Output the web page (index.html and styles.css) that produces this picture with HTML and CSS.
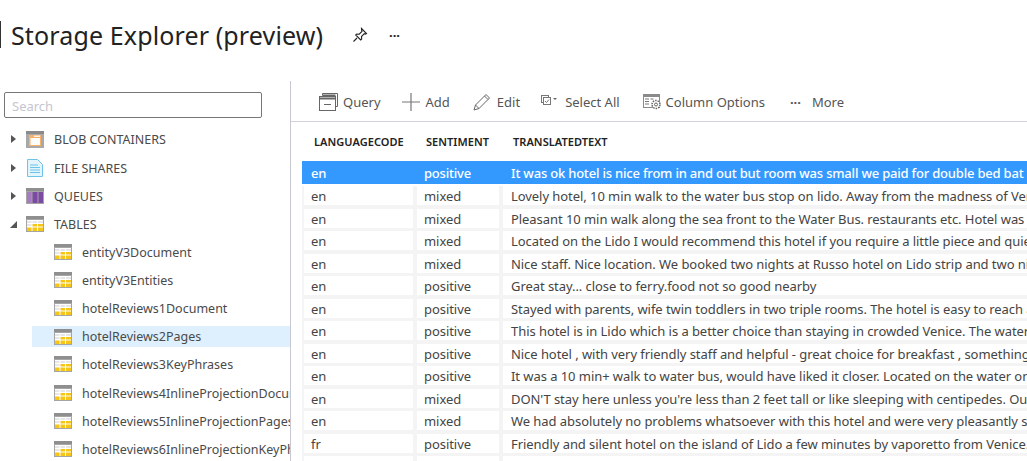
FILE: index.html
```html
<!DOCTYPE html>
<html lang="en">
	<head>
		<meta charset="UTF-8" />
		<title>Storage Explorer (preview)</title>
		<link rel="stylesheet" href="styles.css">
	</head>
	<body>
		<svg class="defs" width="0" height="0">
			<symbol id="tbl" viewBox="0 0 18 16">
				<rect width="18" height="16" fill="#a5a5a5"/>
				<rect y="0" width="18" height="3" fill="#8f8f8f"/>
				<rect x="1" y="4" width="16" height="11" fill="#fff"/>
				<path d="M1 5h4.500v2H1zM6.500 5h4.500v2H6.500zM12 5h5v2h-5zM1 8h4.500v2H1z" fill="#e6e6e6"/>
				<path d="M6.500 8h4.500v2.500H6.500zM12 8h5v2.500h-5zM1 11.500h4.500V15H1zM6.500 11.500h4.500V15H6.500zM12 11.500h5V15h-5z" fill="#f5c518"/>
			</symbol>
		</svg>

		<header class="title-bar">
			<span class="title-rule"></span>
			<h1>Storage Explorer (preview)</h1>
			<svg class="pin" width="16" height="16" viewBox="0 0 16 16" fill="none" stroke="#222" stroke-width="1.100">
				<path d="M9.500 1.500l5 5-1.200.6-1-.4-2.800 2.800.2 2.500-1 1-5-5 1-1 2.500.2 2.800-2.800-.4-1z"/>
				<path d="M5 11l-3.500 3.500"/>
			</svg>
			<span class="title-more">···</span>
		</header>

		<div class="main">
			<aside class="sidebar">
				<input class="search" type="text" placeholder="Search" />
				<ul class="tree">
					<li class="node first">
						<span class="caret"></span>
						<svg class="ico" width="18" height="17" viewBox="0 0 18 17">
							<rect width="18" height="17" fill="#a8a8a8"/>
							<rect width="18" height="3" fill="#8a8a8a"/>
							<rect x="3" y="4" width="12" height="11" fill="#f7b26a"/>
							<rect x="4.500" y="7" width="9.500" height="7" fill="#fdfdfd"/>
							<rect x="8" y="4.500" width="6" height="1.500" fill="#fdf1e2"/>
						</svg>
						BLOB CONTAINERS
					</li>
					<li class="node">
						<span class="caret"></span>
						<svg class="ico" width="18" height="18" viewBox="0 0 18 18">
							<path d="M1.500 .5h10l5 5v12h-15z" fill="#e3f4fb" stroke="#6cc4e8"/>
							<path d="M4 6h8M4 8.500h10M4 11h10M4 13.500h10" stroke="#6cc4e8"/>
						</svg>
						FILE SHARES
					</li>
					<li class="node">
						<span class="caret"></span>
						<svg class="ico" width="18" height="16" viewBox="0 0 18 16">
							<rect width="18" height="16" fill="#a5a5a5"/>
							<rect y="0" width="18" height="3" fill="#8f8f8f"/>
							<rect x="1" y="4" width="4.500" height="11" fill="#a67cc0"/>
							<rect x="6.500" y="4" width="5" height="11" fill="#7d4aa3"/>
							<rect x="12.500" y="4" width="4.500" height="11" fill="#7d4aa3"/>
						</svg>
						QUEUES
					</li>
					<li class="node">
						<span class="caret open"></span>
						<svg class="ico" width="18" height="16"><use href="#tbl"/></svg>
						TABLES
					</li>
					<li class="leaf"><svg class="ico" width="18" height="16"><use href="#tbl"/></svg><span>entityV3Document</span></li>
					<li class="leaf"><svg class="ico" width="18" height="16"><use href="#tbl"/></svg><span>entityV3Entities</span></li>
					<li class="leaf"><svg class="ico" width="18" height="16"><use href="#tbl"/></svg><span>hotelReviews1Document</span></li>
					<li class="leaf active"><svg class="ico" width="18" height="16"><use href="#tbl"/></svg><span>hotelReviews2Pages</span></li>
					<li class="leaf"><svg class="ico" width="18" height="16"><use href="#tbl"/></svg><span>hotelReviews3KeyPhrases</span></li>
					<li class="leaf pushed"><svg class="ico" width="18" height="16"><use href="#tbl"/></svg><span>hotelReviews4InlineProjectionDocument</span></li>
					<li class="leaf"><svg class="ico" width="18" height="16"><use href="#tbl"/></svg><span>hotelReviews5InlineProjectionPages</span></li>
					<li class="leaf"><svg class="ico" width="18" height="16"><use href="#tbl"/></svg><span>hotelReviews6InlineProjectionKeyPhrases</span></li>
				</ul>
			</aside>

			<section class="content">
				<div class="toolbar">
					<span class="tool tool-query">
						<svg width="20" height="18" viewBox="0 0 20 18" fill="none" stroke="#666">
							<path d="M3.500 2.500v-2h15v13h-2"/>
							<path d="M3.500 2.500h13" stroke-width="2"/>
							<rect x=".5" y="3.500" width="16" height="14"/>
							<path d="M.5 5.500h16" stroke-width="2"/>
							<path d="M5 11.500h7"/>
						</svg>
						Query
					</span>
					<span class="tool tool-add">
						<svg width="18" height="18" viewBox="0 0 18 18" stroke="#777" stroke-width="1.200"><path d="M9 0v18M0 9h18"/></svg>
						Add
					</span>
					<span class="tool tool-edit">
						<svg width="18" height="18" viewBox="0 0 18 18" fill="none" stroke="#666">
							<path d="M13 1.500l3.500 3.500L6 15.500l-5 1.500 1.500-5z"/>
							<path d="M2.500 12l3.500 3.500M11.500 3l3.500 3.500"/>
						</svg>
						Edit
					</span>
					<span class="tool tool-select">
						<svg width="18" height="14" viewBox="0 0 18 14" fill="none" stroke="#777">
							<rect x=".5" y=".5" width="7" height="7"/>
							<rect x="2.500" y="2.500" width="7" height="7" fill="#fff"/>
							<path d="M4 6l1.500 1.500L8 4.500" />
							<path d="M12 3h4l-2 2z" fill="#666" stroke="none"/>
						</svg>
						Select All
					</span>
					<span class="tool tool-cols">
						<svg width="19" height="16" viewBox="0 0 19 16" fill="none">
							<rect width="17" height="14" fill="#8a8a8a"/>
							<rect x="1" y="3" width="15" height="10" fill="#fff"/>
							<path d="M2 5h4M2 7.500h4M2 10h4M7.500 5h3" stroke="#777"/>
							<circle cx="13" cy="10.500" r="4" fill="#fff" stroke="#666" stroke-width="1.500" stroke-dasharray="1.500 1"/>
							<circle cx="13" cy="10.500" r="1.500" stroke="#666"/>
						</svg>
						Column Options
					</span>
					<span class="tool tool-more"><span class="dots">···</span>More</span>
				</div>

				<div class="grid">
					<div class="grid-head">
						<span class="c1">LANGUAGECODE</span>
						<span class="c2">SENTIMENT</span>
						<span class="c3">TRANSLATEDTEXT</span>
					</div>
					<div class="row selected"><span class="c1">en</span><span class="c2">positive</span><span class="c3">It was ok hotel is nice from in and out but room was small we paid for double bed bat they gave us a twin room</span></div>
					<div class="row"><span class="c1">en</span><span class="c2">mixed</span><span class="c3">Lovely hotel, 10 min walk to the water bus stop on lido. Away from the madness of Venice and very quiet</span></div>
					<div class="row"><span class="c1">en</span><span class="c2">mixed</span><span class="c3">Pleasant 10 min walk along the sea front to the Water Bus. restaurants etc. Hotel was comfortable and clean</span></div>
					<div class="row"><span class="c1">en</span><span class="c2">mixed</span><span class="c3">Located on the Lido I would recommend this hotel if you require a little piece and quiet after the city</span></div>
					<div class="row"><span class="c1">en</span><span class="c2">mixed</span><span class="c3">Nice staff. Nice location. We booked two nights at Russo hotel on Lido strip and two nights in the city</span></div>
					<div class="row"><span class="c1">en</span><span class="c2">positive</span><span class="c3">Great stay... close to ferry.food not so good nearby</span></div>
					<div class="row"><span class="c1">en</span><span class="c2">positive</span><span class="c3">Stayed with parents, wife twin toddlers in two triple rooms. The hotel is easy to reach and the staff were kind</span></div>
					<div class="row"><span class="c1">en</span><span class="c2">positive</span><span class="c3">This hotel is in Lido which is a better choice than staying in crowded Venice. The water bus is close to it</span></div>
					<div class="row"><span class="c1">en</span><span class="c2">positive</span><span class="c3">Nice hotel , with very friendly staff and helpful - great choice for breakfast , something for everyone there</span></div>
					<div class="row"><span class="c1">en</span><span class="c2">positive</span><span class="c3">It was a 10 min+ walk to water bus, would have liked it closer. Located on the water on a lovely street</span></div>
					<div class="row"><span class="c1">en</span><span class="c2">mixed</span><span class="c3">DON'T stay here unless you're less than 2 feet tall or like sleeping with centipedes. Our room was awful</span></div>
					<div class="row"><span class="c1">en</span><span class="c2">mixed</span><span class="c3">We had absolutely no problems whatsoever with this hotel and were very pleasantly surprised by the room</span></div>
					<div class="row"><span class="c1">fr</span><span class="c2">positive</span><span class="c3">Friendly and silent hotel on the island of Lido a few minutes by vaporetto from Venice. We really enjoyed it</span></div>
					<div class="row"><span class="c1"></span><span class="c2"></span><span class="c3"></span></div>
				</div>
			</section>
		</div>
	</body>
</html>
```

FILE: styles.css
```css
* {
	box-sizing: border-box;
	margin: 0;
	padding: 0;
}

html,
body {
	height: 461px;
	overflow: hidden;
}

body {
	font-family: "Noto Sans", "Open Sans", sans-serif;
	background-color: white;
	color: #444;
	font-size: 13px;
}

.defs {
	display: block;
	height: 0;
}

.title-bar {
	height: 81px;
	display: flex;
	align-items: center;
	padding-bottom: 12px;
	color: #222;
}

.title-rule {
	width: 1px;
	height: 27px;
	background-color: #333;
}

.title-bar h1 {
	font-weight: normal;
	font-size: 25px;
	margin-left: 10px;
	width: 341px;
	letter-spacing: 0.13px;
}

.title-more {
	margin-left: 21px;
	font-weight: bold;
	font-size: 13px;
}

.main {
	display: flex;
	height: 380px;
}

.sidebar {
	width: 291px;
	border-right: 1px solid #c8c8d4;
	padding-top: 11px;
	padding-left: 4px;
	overflow: hidden;
}

.search {
	display: block;
	width: 258px;
	height: 26px;
	border: 1px solid #777;
	border-radius: 2px;
	padding: 1px 7px 0;
	font-family: inherit;
	font-size: 13px;
}

.search::placeholder {
	color: #c5c5d0;
}

.tree {
	list-style: none;
	margin-top: 8px;
	margin-left: -4px;
}

.node,
.leaf {
	height: 28px;
	display: flex;
	align-items: center;
	white-space: nowrap;
	color: #4a4a4a;
	font-size: 12.500px;
}

.node {
	padding-left: 11px;
}

.node.first {
	padding-bottom: 2px;
}

.caret {
	width: 0;
	height: 0;
	margin-right: 10px;
	border-style: solid;
	border-width: 4px 0 4px 5px;
	border-color: transparent transparent transparent #555;
}

.caret.open {
	margin-left: -1px;
	margin-right: 9px;
	border-width: 0 0 7px 7px;
	border-color: transparent transparent #555 transparent;
}

.ico {
	flex: none;
	margin-right: 10px;
}

.leaf {
	margin-left: 32px;
	padding-left: 22px;
}

.leaf.active {
	height: 21px;
	margin-top: 4px;
	margin-bottom: 3px;
	background-color: #def0fd;
}

.leaf.pushed {
	margin-top: 1px;
}

.content {
	flex: 1;
	min-width: 0;
	overflow: hidden;
}

.toolbar {
	height: 41px;
	display: flex;
	align-items: center;
	padding-top: 2px;
	border-bottom: 1px solid #d3d3e0;
	color: #555;
	white-space: nowrap;
	font-size: 13px;
}

.tool {
	display: flex;
	align-items: center;
	gap: 6px;
}

.tool-query {
	margin-left: 28px;
	gap: 4px;
}

.tool-add {
	margin-left: 21px;
}

.tool-edit {
	margin-left: 23px;
}

.tool-select {
	margin-left: 21px;
}

.tool-cols {
	margin-left: 23px;
	gap: 4px;
}

.tool-more {
	margin-left: 25px;
	gap: 0;
}

.dots {
	font-weight: bold;
	width: 22px;
}

.grid-head {
	height: 39px;
	display: flex;
	align-items: center;
	color: #222;
	font-weight: 600;
	font-size: 11px;
	letter-spacing: 0.05px;
	padding-left: 23px;
}

.grid-head .c1 {
	width: 112px;
}

.grid-head .c2 {
	width: 87px;
}

.row {
	display: flex;
	height: 22.500px;
	margin-left: 11px;
	background-color: #f4f4f4;
	white-space: nowrap;
	overflow: hidden;
	line-height: 21px;
	letter-spacing: -0.06px;
}

.row span {
	display: block;
	background-color: white;
	padding-left: 7px;
	height: 19px;
}

.row .c1 {
	width: 109px;
	margin-left: 2px;
	flex: none;
}

.row .c2 {
	width: 82px;
	margin-left: 4px;
	flex: none;
}

.row .c3 {
	margin-left: 4px;
	flex: 1;
	padding-left: 8px;
	overflow: hidden;
}

.row.selected {
	background-color: #3399ff;
	height: 23px;
	margin-bottom: 2px;
	color: white;
	font-weight: 500;
	letter-spacing: -0.2px;
}

.row.selected span {
	background-color: transparent;
	line-height: 24px;
	height: 23px;
}
```
